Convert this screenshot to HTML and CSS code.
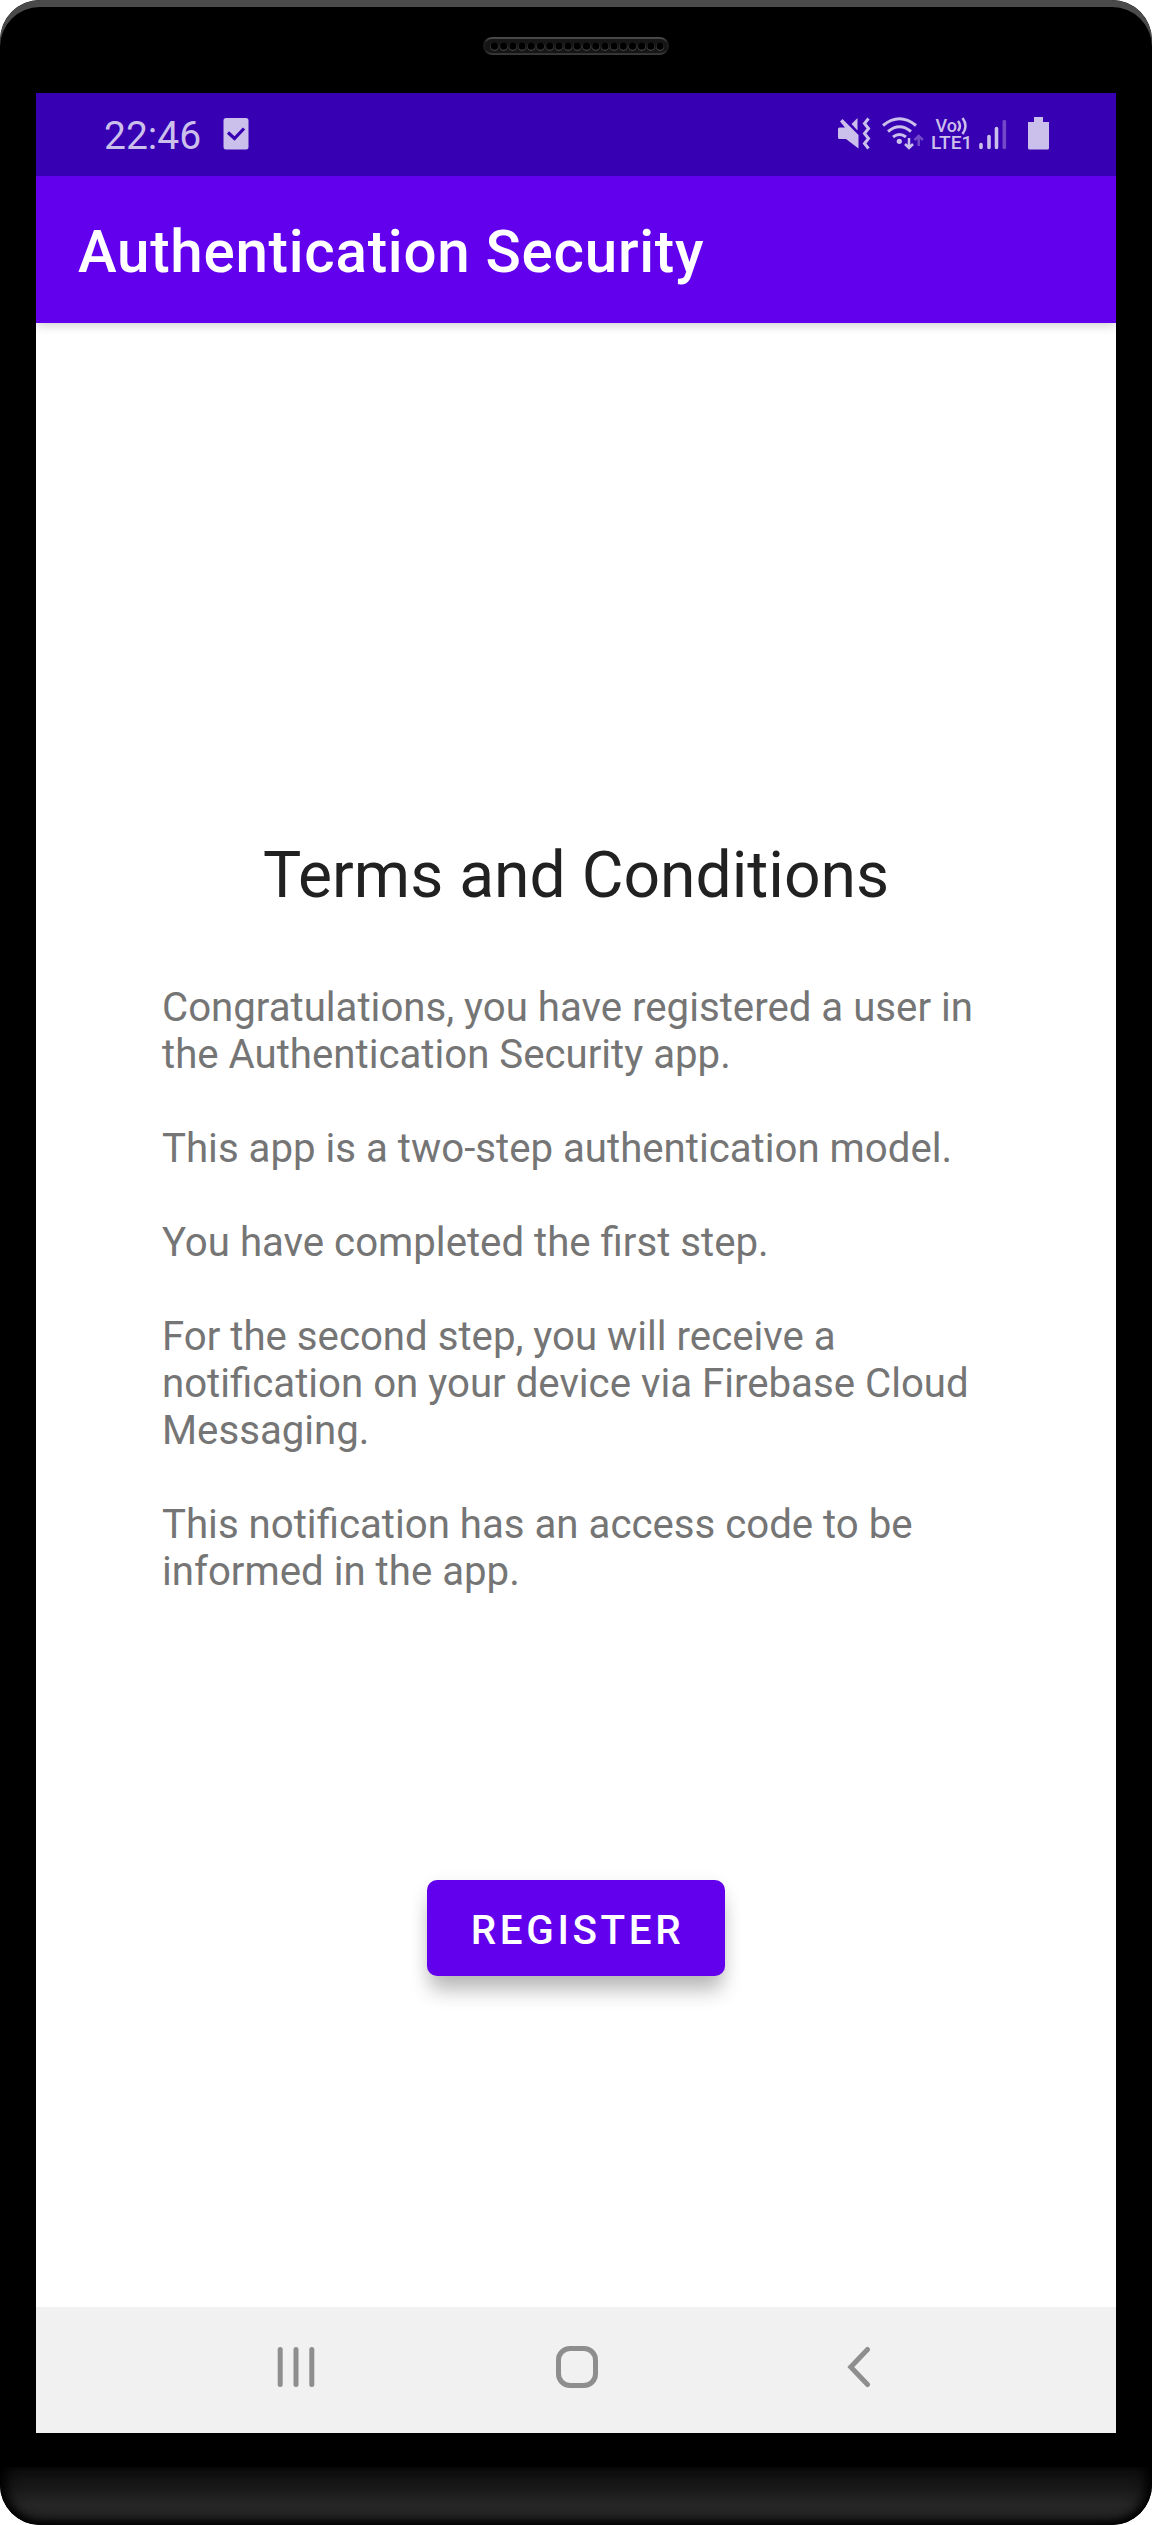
FILE: index.html
```html
<!DOCTYPE html>
<html lang="en">
<head>
<meta charset="utf-8">
<title>Authentication Security</title>
<link rel="stylesheet" href="styles.css">
</head>
<body>
<div class="phone">
  <div class="phone-top">
    <svg class="speaker" width="186" height="18" viewBox="0 0 186 18">
      <defs>
        <linearGradient id="rim" x1="0" y1="0" x2="0" y2="1"><stop offset="0" stop-color="#4a4a4a"/><stop offset=".3" stop-color="#1c1c1c"/><stop offset=".75" stop-color="#1c1c1c"/><stop offset="1" stop-color="#383838"/></linearGradient>
      </defs>
      <rect x="1" y="1" width="184" height="16" rx="8" fill="#161616" stroke="url(#rim)" stroke-width="2"/>
      <path d="M11.500 9.800H178" fill="none" stroke="#444" stroke-width="8.200" stroke-linecap="round" stroke-dasharray="0 9.200"/>
      <path d="M11.500 9.200H178" fill="none" stroke="#000" stroke-width="7.200" stroke-linecap="round" stroke-dasharray="0 9.200"/>
    </svg>
  </div>
  <main class="screen">
    <header class="status">
      <div class="status-left">
        <span class="clock">22:46</span>
        <svg class="check" width="26" height="32" viewBox="0 0 26 32"><rect x=".500" width="25" height="31.500" rx="2.500" fill="#cbbfeb"/><path d="M5 14.500l6.500 6L21 10.500" fill="none" stroke="#3700b3" stroke-width="3.200"/></svg>
      </div>
      <svg class="status-icons" width="214" height="36" viewBox="836 115 214 36" fill="none" stroke="#cbbfeb">
        <path d="M838 129q0-1.500 1.500-1.500h5.500l-5-6 2.500-2.500 16 16v13.500L846 139h-6.500q-1.500 0-1.500-1.500z" fill="#cbbfeb" stroke="none"/>
        <path d="M857.500 118v12.500l-6-6.500z" fill="#cbbfeb" stroke="none"/>
        <path d="M868.500 118.500l-4 5 4 5-4 5 4 5-4 5 4 5" stroke-width="3"/>
        <path d="M883 125.500q16.500-13.500 33 0M888 131.500q11.500-9.500 23 0M893 137q6.500-5 13 0" stroke-width="3"/>
        <circle cx="899.300" cy="141.300" r="2.600" fill="#cbbfeb" stroke="none"/>
        <path d="M909 138v10M905 144l4 4 4-4" stroke-width="2.500"/>
        <path d="M918.700 146v-9.500M914.500 140l4.200-4 4.200 4" stroke="#7349ca" stroke-width="2.500"/>
        <g class="volte" fill="#cbbfeb" stroke="none"><text x="935.500" y="131.500" textLength="21.500" lengthAdjust="spacingAndGlyphs">Vo</text><text x="931" y="149" textLength="41.500" lengthAdjust="spacingAndGlyphs">LTE1</text></g>
        <path d="M958 121q4 5 0 10M962.500 118q6 8 0 16" stroke-width="2.500"/>
        <path d="M981 144.500v3M989 136.500v11M996.500 128.500v19" stroke-width="3.600" stroke-linecap="round"/>
        <path d="M1004.300 121.500v26" stroke="#7349ca" stroke-width="3.600" stroke-linecap="round"/>
        <path d="M1034 117h9v5h6v26q0 1.500-1.500 1.500h-18q-1.500 0-1.500-1.500v-26h6z" fill="#cbbfeb" stroke="none"/>
      </svg>
    </header>
    <div class="appbar">Authentication Security</div>
    <section class="content">
      <h1>Terms and Conditions</h1>
      <div class="terms">
        <p>Congratulations, you have registered a user in<br>the Authentication Security app.</p>
        <p>This app is a two-step authentication model.</p>
        <p>You have completed the first step.</p>
        <p>For the second step, you will receive a<br>notification on your device via Firebase Cloud<br>Messaging.</p>
        <p>This notification has an access code to be<br>informed in the app.</p>
      </div>
      <button class="register">REGISTER</button>
    </section>
    <nav class="navbar">
      <svg width="42" height="42" viewBox="0 0 42 42"><path d="M5.200 3.500v35M21 3.500v35M36.800 3.500v35"/></svg>
      <svg width="42" height="42" viewBox="0 0 42 42"><rect x="2.500" y="2.500" width="37" height="37" rx="11.500"/></svg>
      <svg width="42" height="42" viewBox="0 0 42 42"><path d="M30.500 3.500L13.800 21l16.700 17.500"/></svg>
    </nav>
  </main>
  <div class="chin"></div>
</div>
</body>
</html>
```

FILE: styles.css
```css
body {
  margin: 0;
  background: #fff;
  font-family: Roboto, sans-serif;
}
.phone {
  box-sizing: border-box;
  height: 2525px;
  display: flex;
  flex-direction: column;
  background: #000;
  border-radius: 40px;
  overflow: hidden;
}
.phone-top {
  height: 93px;
  box-sizing: border-box;
  padding-top: 37px;
  display: flex;
  justify-content: center;
  align-items: flex-start;
  border-radius: 40px 40px 0 0;
  box-shadow: inset 0 7px 0 #4a4a4a;
}
.speaker { display: block; margin-left: -1px; }
.screen {
  margin: 0 36px;
  height: 2340px;
  display: flex;
  flex-direction: column;
  background: #fff;
}
.status {
  height: 83px;
  box-sizing: border-box;
  padding: 0 66px 3px 68px;
  display: flex;
  align-items: center;
  justify-content: space-between;
  background: #3700b3;
}
.status-left { display: flex; align-items: center; gap: 22px; color: #cbbfeb; }
.clock { font-size: 39px; line-height: 46px; padding-top: 5px; }
.check { margin-top: 2px; }
.status-icons { overflow: visible; }
.volte { font: 500 19px Roboto, sans-serif; }
.appbar {
  height: 147px;
  box-sizing: border-box;
  padding: 5px 42px 0;
  display: flex;
  align-items: center;
  background: #6200ee;
  color: #fff;
  font-size: 58.300px;
  font-weight: 500;
  letter-spacing: 0.0125em;
  box-shadow: 0 2px 10px rgba(0, 0, 0, .2);
  clip-path: inset(0 0 -20px 0);
}
.content {
  flex: 1;
  display: flex;
  flex-direction: column;
  align-items: center;
  padding-top: 512px;
}
h1 {
  margin: 0 0 69px;
  font-size: 64.200px;
  line-height: 80px;
  font-weight: 400;
  color: #212121;
}
.terms {
  width: 828px;
  font-size: 40.200px;
  line-height: 47px;
  color: #757575;
  white-space: nowrap;
}
.terms p { margin: 0 0 47px; }
.terms p:last-child { margin: 0; }
.register {
  width: 298px;
  height: 96px;
  margin-top: 285px;
  padding: 5px 0 0 3px;
  border: 0;
  border-radius: 10px;
  background: #6200ee;
  color: #fff;
  font: 500 40.400px Roboto, sans-serif;
  letter-spacing: 0.0893em;
  box-shadow: 0 18px 20px -3px rgba(0, 0, 0, .24), 0 4px 18px rgba(0, 0, 0, .08);
}
.navbar {
  height: 126px;
  box-sizing: border-box;
  padding: 0 237px 6px 239px;
  display: flex;
  align-items: center;
  justify-content: space-between;
  background: #f1f1f1;
}
.navbar svg {
  fill: none;
  stroke: #8e8e8e;
  stroke-width: 5;
  stroke-linecap: round;
}
.chin {
  height: 58px;
  margin-top: 34px;
  border-radius: 0 0 40px 40px;
  background: linear-gradient(#0c0c0c, #181818 35%, #262626 65%, #222);
  box-shadow: inset 0 -6px 8px -2px #000, inset 12px 0 14px -6px #000, inset -12px 0 14px -6px #000;
}
```
